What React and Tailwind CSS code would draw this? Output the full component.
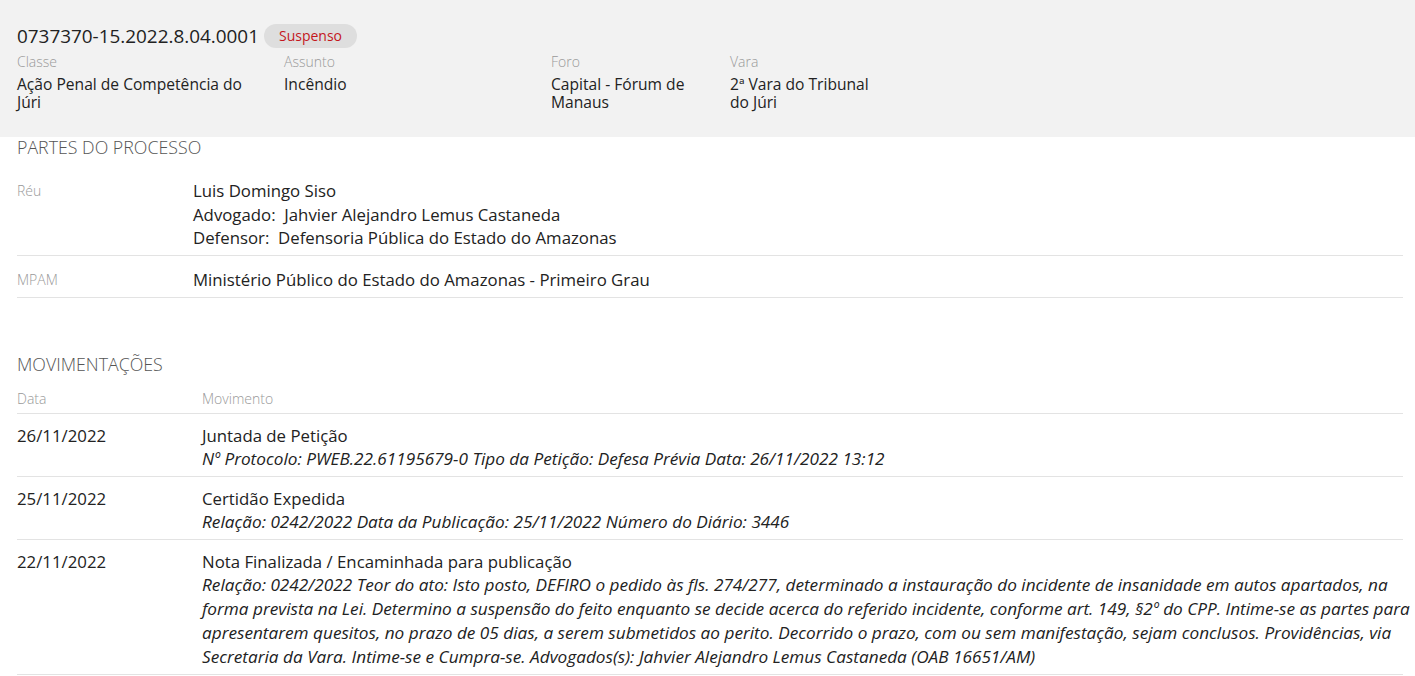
import React from 'react';

const info = [
    { label: 'Classe', value: 'Ação Penal de Competência do Júri', w: 'w-[250px]' },
    { label: 'Assunto', value: 'Incêndio', w: 'w-[250px]' },
    { label: 'Foro', value: 'Capital - Fórum de Manaus', w: 'w-[162px]' },
    { label: 'Vara', value: '2ª Vara do Tribunal do Júri', w: 'w-[150px]' },
];

const movs = [
    {
        data: '26/11/2022',
        titulo: 'Juntada de Petição',
        desc: 'Nº Protocolo: PWEB.22.61195679-0 Tipo da Petição: Defesa Prévia Data: 26/11/2022 13:12',
    },
    {
        data: '25/11/2022',
        titulo: 'Certidão Expedida',
        desc: 'Relação: 0242/2022 Data da Publicação: 25/11/2022 Número do Diário: 3446',
    },
    {
        data: '22/11/2022',
        titulo: 'Nota Finalizada / Encaminhada para publicação',
        desc: 'Relação: 0242/2022 Teor do ato: Isto posto, DEFIRO o pedido às fls. 274/277, determinado a instauração do incidente de insanidade em autos apartados, na forma prevista na Lei. Determino a suspensão do feito enquanto se decide acerca do referido incidente, conforme art. 149, §2º do CPP. Intime-se as partes para apresentarem quesitos, no prazo de 05 dias, a serem submetidos ao perito. Decorrido o prazo, com ou sem manifestação, sejam conclusos. Providências, via Secretaria da Vara. Intime-se e Cumpra-se. Advogados(s): Jahvier Alejandro Lemus Castaneda (OAB 16651/AM)',
    },
];

const App = () => {
    return (
        <div className="min-h-screen bg-white text-[#222] font-['Open_Sans',sans-serif]">

            {/* --- CABEÇALHO DO PROCESSO --- */}
            <div className="bg-[#f2f2f2] h-[137px] pl-[17px] pr-[12px] pt-[24px]">
                <div className="flex items-center">
                    <span className="text-[18.9px] leading-[24px] text-[#222]">0737370-15.2022.8.04.0001</span>
                    <span className="ml-[5px] h-[24px] px-[15px] rounded-full bg-[#dedede] text-[#c4161c] text-[14px] leading-[24px]">
                        Suspenso
                    </span>
                </div>
                <div className="flex gap-[17px] mt-[5px]">
                    {info.map(i => (
                        <div key={i.label} className={i.w}>
                            <div className="text-[14px] leading-[18px] text-[#999] font-light">{i.label}</div>
                            <div className="text-[15.6px] leading-[18px] text-[#222] mt-[4px]">{i.value}</div>
                        </div>
                    ))}
                </div>
            </div>

            {/* --- PARTES DO PROCESSO --- */}
            <div className="pl-[17px] pr-[12px]">
                <h2 className="text-[17.8px] leading-[20px] text-[#555] font-light">PARTES DO PROCESSO</h2>

                <div className="mt-[10px]">
                    <div className="flex border-b border-[#e3e3e3] pt-[12px] pb-[5px]">
                        <div className="w-[176px] text-[14px] leading-[23.5px] text-[#999] font-light">Réu</div>
                        <div className="text-[16.8px] leading-[23.5px]">
                            <div>Luis Domingo Siso</div>
                            <div>Advogado:&nbsp; Jahvier Alejandro Lemus Castaneda</div>
                            <div>Defensor:&nbsp; Defensoria Pública do Estado do Amazonas</div>
                        </div>
                    </div>
                    <div className="flex border-b border-[#e3e3e3] pt-[12px] pb-[6px]">
                        <div className="w-[176px] text-[14px] leading-[23.5px] text-[#999] font-light">MPAM</div>
                        <div className="text-[16.8px] leading-[23.5px]">
                            Ministério Público do Estado do Amazonas - Primeiro Grau
                        </div>
                    </div>
                </div>

                {/* --- MOVIMENTAÇÕES --- */}
                <h2 className="mt-[56px] text-[17.8px] leading-[20px] text-[#555] font-light">MOVIMENTAÇÕES</h2>

                <div className="flex border-b border-[#e3e3e3] mt-[16px] pb-[5px] text-[14px] leading-[18px] text-[#999] font-light">
                    <div className="w-[185px]">Data</div>
                    <div>Movimento</div>
                </div>

                {movs.map(m => (
                    <div key={m.data} className="flex border-b border-[#e3e3e3] pt-[11px] pb-[5px]">
                        <div className="w-[185px] shrink-0 text-[16.8px] leading-[22px]">{m.data}</div>
                        <div className="flex-1 mr-[-12px]">
                            <div className="text-[16.8px] leading-[22px]">{m.titulo}</div>
                            <div className="italic text-[17.2px] leading-[24px]">{m.desc}</div>
                        </div>
                    </div>
                ))}
            </div>
        </div>
    );
};

export default App;
